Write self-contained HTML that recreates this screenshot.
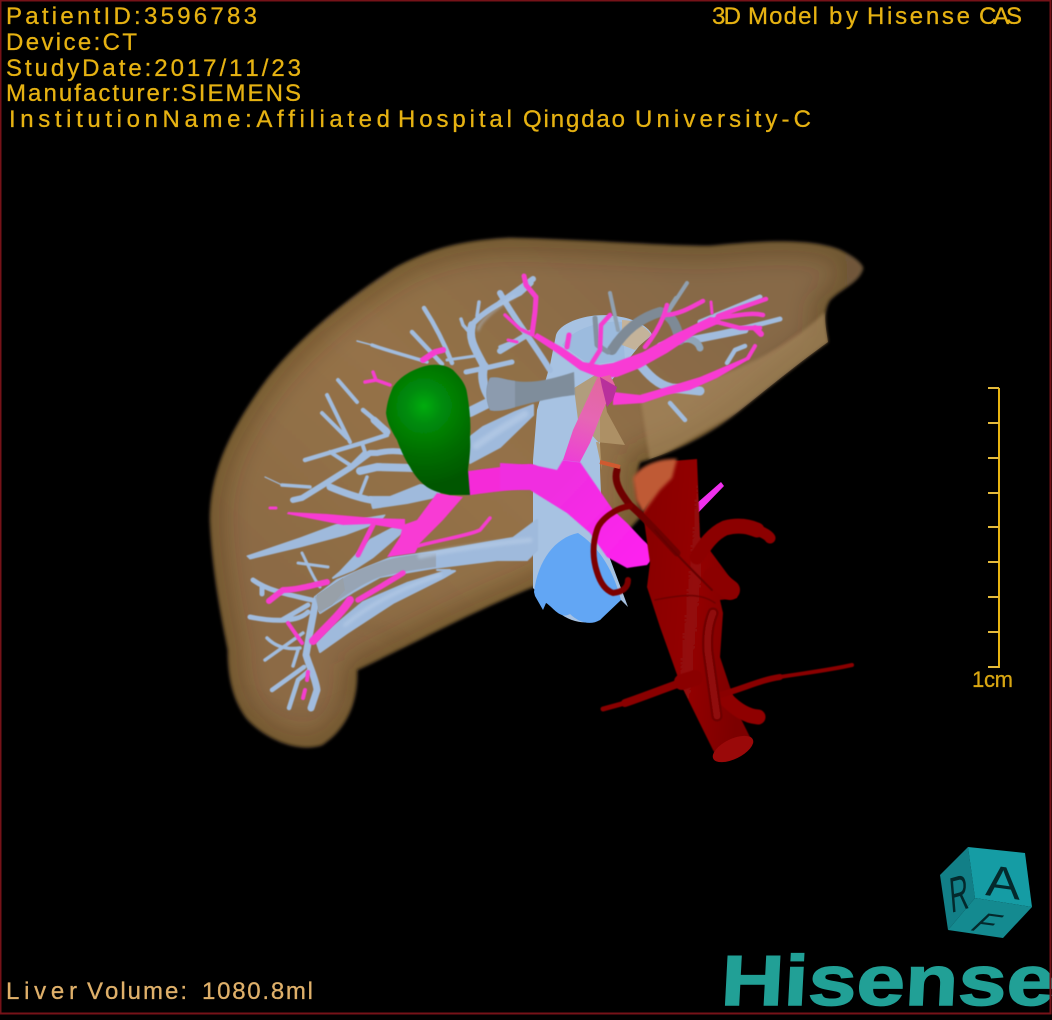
<!DOCTYPE html>
<html><head><meta charset="utf-8"><style>
html,body{margin:0;padding:0;background:#000;width:1052px;height:1020px;overflow:hidden}
svg{display:block}
text{font-family:"Liberation Sans",sans-serif;font-kerning:none}
.t{font-size:24px;fill:#e6b212;stroke:#e6b212;stroke-width:.3}
.v path{fill:none;stroke-linecap:round;stroke-linejoin:round}
</style></head><body>
<svg width="1052" height="1020" viewBox="0 0 1052 1020" xmlns="http://www.w3.org/2000/svg">
<defs>
<path id="lp" d="M863 268C860 282 842 288 830 300C822 312 826 328 828 342C800 362 768 388 738 412C705 438 668 454 640 462C634 478 636 500 641 516L630 528L604 540C580 556 556 575 533 587C475 610 410 645 357 670C358 700 348 728 322 745C300 752 270 742 248 720C232 700 228 675 228 650C222 620 212 570 210 520C210 470 232 430 258 392C290 345 345 300 395 268C435 246 470 240 510 238C590 240 660 246 710 246C760 241 810 238 840 250C852 256 861 262 863 268Z"/>
<linearGradient id="lv" gradientUnits="userSpaceOnUse" x1="300" y1="600" x2="640" y2="240"><stop offset="0" stop-color="#8c6b44"/><stop offset="0.45" stop-color="#957248"/><stop offset="1" stop-color="#876946"/></linearGradient>
<radialGradient id="gr" gradientUnits="userSpaceOnUse" cx="424" cy="406" r="80"><stop offset="0" stop-color="#02ac0a"/><stop offset="0.22" stop-color="#018c08"/><stop offset="0.6" stop-color="#006e04"/><stop offset="1" stop-color="#045604"/></radialGradient>
<linearGradient id="ao" x1="0" y1="0" x2="1" y2="0.25"><stop offset="0" stop-color="#870505"/><stop offset="0.55" stop-color="#940707"/><stop offset="1" stop-color="#7c0404"/></linearGradient>
<linearGradient id="mg" gradientUnits="userSpaceOnUse" x1="560" y1="480" x2="650" y2="565"><stop offset="0" stop-color="#f02fe0"/><stop offset="1" stop-color="#ff20f0"/></linearGradient>
<linearGradient id="up" gradientUnits="userSpaceOnUse" x1="600" y1="380" x2="570" y2="465"><stop offset="0" stop-color="#e2689e"/><stop offset="0.45" stop-color="#e666b4"/><stop offset="1" stop-color="#ee3cd8"/></linearGradient>
<filter id="b2" x="-5%" y="-5%" width="110%" height="110%"><feGaussianBlur stdDeviation="1.5"/></filter>
<filter id="b6" x="-10%" y="-10%" width="120%" height="120%"><feGaussianBlur stdDeviation="14"/></filter>
<filter id="b4" x="-20%" y="-20%" width="140%" height="140%"><feGaussianBlur stdDeviation="4"/></filter>
<filter id="s" x="-5%" y="-5%" width="110%" height="110%"><feGaussianBlur stdDeviation="0.5"/></filter>
<clipPath id="lc"><use href="#lp"/></clipPath>
</defs>
<rect width="1052" height="1020" fill="#000"/>

<!-- liver -->
<use href="#lp" fill="url(#lv)" filter="url(#b2)"/>
<g clip-path="url(#lc)">
<use href="#lp" fill="none" stroke="#3c2c18" stroke-opacity=".6" stroke-width="16" filter="url(#b6)"/>
<path d="M640 395C700 388 775 360 825 312L830 345L738 412L650 462Z" fill="#a98a5e" opacity=".6" filter="url(#b2)"/>
<path d="M240 690C265 720 315 722 350 700" fill="none" stroke="#7c6040" stroke-width="10" opacity=".3" filter="url(#b4)"/>
<path d="M410 660C405 640 395 630 352 625" fill="none" stroke="#7a5c38" stroke-width="5" opacity=".3" filter="url(#b4)"/>
</g>

<!-- IVC -->
<path d="M556 335C560 322 590 312 615 316C635 318 650 328 652 335L640 345L600 395L600 470L603 540L628 607L619 598L600 620C585 625 570 622 558 612L548 604L533 588L533 460L537 410L550 365Z" fill="#a7c2e2"/>
<path d="M562 345C575 325 610 320 622 322L625 360L590 365Z" fill="#9cbbde"/>
<path d="M622 320C635 320 648 328 651 335L635 350L622 345Z" fill="#c4b39a"/>
<path d="M534 592C538 560 555 538 578 533C596 545 612 565 621 600L600 620C590 626 578 622 570 614C560 620 552 606 546 603L543 610L535 596Z" fill="#62a6f4"/>
<!-- tan overlay -->
<path d="M574 388L600 372L607 412L625 445L596 442L602 470L600 444L578 420Z" fill="#b3976b" opacity=".85"/>

<!-- veins -->
<g fill="#9fbadc" stroke="#9fbadc" stroke-width="2" stroke-linejoin="round" filter="url(#s)">
<path d="M533 405L515 412L483 427L470 437L470 463L500 447L533 415Z"/>
<path d="M537 520L513 538L433 552L390 558L337 580L315 597L320 613L353 592L380 577L433 568L497 560L527 560L537 550Z"/>
<path d="M437 570L450 570L407 583L363 602L333 627L317 643L320 652L347 633L393 603L443 578L455 571Z"/>
<path d="M333 578L340 572L370 540L393 528L407 528L373 557L353 570Z"/>
<path d="M385 515L343 522L300 538L247 556L250 559L300 547L345 535L380 522Z" stroke-width="1"/>
<path d="M437 486L420 485L390 497L370 497L373 508L407 503L440 496Z"/>
</g>
<g class="v" stroke="#a1bcde" filter="url(#s)">
<path d="M490 398C483 388 481 375 484 366" stroke-width="9"/>
<path d="M484 366C476 350 468 340 472 325" stroke-width="8"/>
<path d="M472 325C482 312 505 300 520 293L531 283" stroke-width="5.5"/>
<path d="M470 333L463 325L461 319M500 347L525 337M477 316L479 302" stroke-width="3.5"/>
<path d="M452 363C445 345 435 325 424 308M442 364L412 332" stroke-width="4.5"/>
<path d="M427 362C405 355 385 350 372 345" stroke-width="3.5"/>
<path d="M372 345L357 341" stroke-width="1.5"/>
<path d="M447 360L475 356" stroke-width="3"/>
<path d="M466 372L490 367L512 362" stroke-width="5"/>
<path d="M470 412L490 402" stroke-width="10"/>
<path d="M405 452C390 450 382 452 377 453L370 453C360 460 354 465 350 468L323 485L302 498L293 500" stroke-width="6"/>
<path d="M413 468L377 467L360 471" stroke-width="8"/>
<path d="M367 477L360 495M310 487L282 485" stroke-width="3.5"/>
<path d="M282 485L265 477" stroke-width="1.2"/>
<path d="M363 410L387 430L387 435L362 443L305 460" stroke-width="4.5"/>
<path d="M374 420L387 432" stroke-width="7"/>
<path d="M362 443L365 452L350 467M330 452L350 465M350 442L327 395M347 438L322 413M338 380L357 402" stroke-width="4"/>
<path d="M370 500C355 497 342 492 330 487" stroke-width="7"/>
<path d="M316 600L310 632L306 655C310 668 316 680 317 690L311 708" stroke-width="7"/>
<path d="M310 670L298 680L289 708" stroke-width="4.5"/>
<path d="M312 600C295 596 270 592 253 580M262 586L262 594" stroke-width="5"/>
<path d="M308 612C298 622 275 622 250 617M308 605L282 620" stroke-width="5"/>
<path d="M303 633L265 660M300 648C285 650 275 646 267 638M298 650L293 666" stroke-width="3.5"/>
<path d="M304 667L272 690" stroke-width="4.5"/>
<path d="M302 553C308 565 313 578 320 587M298 563L328 567" stroke-width="3"/>
<path d="M500 351L530 333M500 303L533 279M500 293C515 320 535 345 550 370" stroke-width="6"/>
<path d="M638 362C648 375 658 385 672 388L700 391" stroke-width="9"/>
<path d="M670 403L685 420M727 363L735 350L745 346" stroke-width="4.5"/>
<path d="M660 345C690 338 720 335 780 319M700 322L760 297" stroke-width="5"/>
<path d="M695 340L745 330" stroke-width="7"/>
</g>
<!-- gray sections -->
<path d="M574 372C555 378 535 384 515 381C505 380 497 376 490 378C485 388 486 400 490 410C500 413 520 405 540 401C553 398 565 396 575 395Z" fill="#7f8d9b" filter="url(#s)"/>
<path d="M515 381C505 380 497 376 490 378C485 388 486 400 490 410C497 412 506 410 515 407Z" fill="#8c9bae" filter="url(#s)"/>
<g class="v" stroke="#7f8e9c" filter="url(#s)">
<path d="M612 350C625 330 640 318 660 312C672 315 676 325 680 340" stroke-width="10" stroke="#7e8a96"/>
<path d="M618 330L610 293M668 312L687 283M665 315L676 298" stroke-width="4" stroke="#90a0b0"/>
<path d="M595 318L597 345L608 352" stroke-width="5" stroke="#83929f"/>
<path d="M680 338C692 338 698 342 700 348" stroke-width="7" stroke="#90a5b8"/>
</g>
<path d="M436 553C415 554 395 557 380 562C360 568 340 578 315 597L320 613C335 603 360 584 380 577C400 572 420 569 436 567Z" fill="#97a4b4" filter="url(#s)"/>
<path d="M343 578L317 595L318 612L332 605L345 590Z" fill="#98a0a8"/>
<!-- highlight on main veins -->
<g class="v" stroke="#b5cbe6" filter="url(#b2)" opacity=".7">
<path d="M525 414C505 426 490 436 476 446" stroke-width="7"/>
<path d="M530 540C490 544 450 550 420 556" stroke-width="5"/>
<path d="M440 575C410 585 375 600 345 625" stroke-width="4"/>
<path d="M478 330C480 320 500 305 515 296" stroke-width="2"/>
</g>

<!-- portal -->
<g fill="#f83ad4" filter="url(#s)">
<path d="M613 363L643 352L673 335L710 317L720 318L720 323L697 333L667 353L640 368L617 377L600 378L580 370L557 353L533 337L537 333L563 348L583 362L600 365Z"/>
<path d="M613 392L640 395L667 387L700 377L733 363L747 357L748 360L717 378L690 390L667 395L643 403L613 405Z"/>
<path d="M437 493L463 497L443 520L420 543L415 553L387 557L400 537L403 525L417 520Z"/>
<path d="M405 519L373 518L327 514L288 512L287 514L343 525L370 524L405 530Z"/>
</g>
<g class="v" stroke="#f53ccf" filter="url(#s)">
<path d="M717 318C735 316 750 312 763 315M718 316L740 308L766 299M717 322L740 328L760 328" stroke-width="4.5"/>
<path d="M755 328L761 334" stroke-width="6"/>
<path d="M748 358L755 346" stroke-width="4"/>
<path d="M645 347C655 335 660 325 664 315C680 315 695 305 703 301M664 315L667 305" stroke-width="4.5"/>
<path d="M712 313L711 302" stroke-width="3"/>
<path d="M533 335L520 329L505 315" stroke-width="3.5"/>
<path d="M532 334L535 312L536 297L526 285L524 276" stroke-width="5"/>
<path d="M590 366L600 350L601 325L610 315" stroke-width="4.5"/>
<path d="M567 347L569 335" stroke-width="5"/>
<path d="M517 342L508 340" stroke-width="3"/>
<path d="M423 360L435 352L443 350" stroke-width="6"/>
<path d="M390 385L376 380L373 372M376 380L365 382" stroke-width="3.5"/>
<path d="M276 508L270 508" stroke-width="3"/>
<path d="M418 546C440 540 470 535 480 530L490 518" stroke-width="3.5"/>
<path d="M373 525L358 555" stroke-width="5"/>
<path d="M327 582C310 586 295 590 283 590L269 601" stroke-width="6"/>
<path d="M350 600C340 615 325 628 313 641" stroke-width="8"/>
<path d="M358 600C375 590 392 580 403 573" stroke-width="5.5"/>
<path d="M288 623L302 643" stroke-width="4"/>
<path d="M308 672L307 680M305 690L303 698" stroke-width="4"/>
<path d="M470 483C490 480 510 478 530 476" stroke-width="24" stroke="#f52cd8"/>
</g>
<path d="M597 378L573 430L563 460L580 462L590 443L603 410L615 385L610 375Z" fill="url(#up)"/>
<path d="M600 377L617 387L613 400L607 407L602 387Z" fill="#b8309c"/>
<path d="M500 463L533 465L557 470L563 460L580 462L613 510L627 523L643 540L657 553L647 565L627 568L607 557L590 533L567 513L530 490L500 490Z" fill="url(#mg)" filter="url(#s)"/>
<path d="M721 482L724 486L696 515L677 546L656 556L654 553L670 541L688 511Z" fill="#f030ee"/>

<!-- artery -->
<path d="M672 461L697 459L699 510L700 537L737 587L737 598L720 600L723 613L720 657L740 717L753 743L720 760L713 750L680 683L660 627L647 587L650 563L643 513Z" fill="url(#ao)" filter="url(#s)"/>
<path d="M633 478C640 465 660 458 677 459L672 478L660 490L643 513L636 500Z" fill="#bf5a36" filter="url(#b2)"/>
<ellipse cx="733" cy="749" rx="22" ry="10" transform="rotate(-26 733 749)" fill="#9a0909"/>
<g class="v" filter="url(#s)">
<path d="M697 557C705 545 712 534 725 528C740 524 750 527 757 530" stroke="#8c0505" stroke-width="15"/>
<path d="M757 530C764 533 768 535 770 538" stroke="#8c0505" stroke-width="11"/>
<path d="M713 577L730 590" stroke="#8c0505" stroke-width="20"/>
<path d="M727 700C735 708 745 716 758 717" stroke="#8f0505" stroke-width="15"/>
<path d="M720 695C745 688 760 680 780 677" stroke="#8a0505" stroke-width="6"/>
<path d="M780 677C805 673 830 670 852 665" stroke="#8a0505" stroke-width="4"/>
<path d="M680 683C655 692 640 698 625 703" stroke="#8a0505" stroke-width="8"/>
<path d="M625 703L603 709" stroke="#8a0505" stroke-width="5"/>
<path d="M682 682L695 678" stroke="#8a0505" stroke-width="16"/>
<path d="M713 613C708 625 707 640 708 652L717 716" stroke="#6c0000" stroke-width="11"/>
<path d="M713 613C708 625 707 640 708 652L717 716" stroke="#900707" stroke-width="7"/>
<path d="M617 470C614 480 618 490 630 505C645 518 660 535 677 553" stroke="#6e0000" stroke-width="7"/>
<path d="M630 506C615 508 600 520 597 530C592 545 593 560 597 572C600 582 605 590 613 593C622 592 628 588 628 580" stroke="#7c0505" stroke-width="6"/>
<path d="M655 530C670 548 690 568 712 590" stroke="#660000" stroke-width="2"/>
<path d="M655 600C680 595 700 592 715 603" stroke="#6e0000" stroke-width="1.5"/>
</g>
<path d="M600 462L620 467" stroke="#cf5a30" stroke-width="4"/>

<!-- gallbladder -->
<path d="M430 365C440 364 448 366 453 370C461 378 466 385 467 393C470 410 471 425 470 437C471 450 469 460 468 470L470 495L450 495C440 493 433 491 427 487C420 482 414 475 410 467C404 458 400 448 397 440C391 430 387 422 386 413C387 402 390 394 393 387C398 380 403 376 410 372C416 369 423 366 430 365Z" fill="url(#gr)" filter="url(#s)"/>

<!-- scale -->
<g stroke="#e8b410" fill="none">
<path d="M999 388V668" stroke-width="2"/>
<path d="M988 388H999M988 423H999M988 458H999M988 493H999M988 527H999M988 562H999M988 597H999M988 632H999M988 667H999" stroke-width="2" stroke="#e4ba3c"/>
</g>
<text class="t" x="972" y="687" textLength="41" style="font-size:22px;fill:#d8a612;stroke:#d8a612">1cm</text>

<!-- text -->
<text class="t" x="6" y="24" textLength="251">PatientID:3596783</text>
<text class="t" x="6" y="50" textLength="131">Device:CT</text>
<text class="t" x="6" y="76" textLength="295">StudyDate:2017/11/23</text>
<text class="t" x="6" y="101" textLength="295">Manufacturer:SIEMENS</text>
<text class="t" x="9" y="127" textLength="381">InstitutionName:Affiliated</text>
<text class="t" x="398" y="127" textLength="114">Hospital</text>
<text class="t" x="523" y="127" textLength="102">Qingdao</text>
<text class="t" x="635" y="127" textLength="176">University-C</text>
<text class="t" x="712" y="24" textLength="29">3D</text>
<text class="t" x="748" y="24" textLength="70">Model</text>
<text class="t" x="829" y="24" textLength="29">by</text>
<text class="t" x="867" y="24" textLength="103">Hisense</text>
<text class="t" x="979" y="24" textLength="43">CAS</text>
<text class="t" x="6" y="999" textLength="71" style="fill:#dfb06a;stroke:#dfb06a">Liver</text>
<text class="t" x="87" y="999" textLength="100" style="fill:#dfb06a;stroke:#dfb06a">Volume:</text>
<text class="t" x="202" y="999" textLength="111" style="fill:#dfb06a;stroke:#dfb06a">1080.8ml</text>

<!-- cube -->
<path d="M940 875L968 847L975 898L948 930Z" fill="#127f87"/>
<path d="M968 847L1025 853L1032 907L975 898Z" fill="#159ca4"/>
<path d="M948 930L975 898L1032 907L1003 938Z" fill="#148a90"/>
<text transform="matrix(.5 -.14 .08 .95 951 913)" font-size="52" fill="#04292c">R</text>
<text transform="matrix(1 .14 -.03 .85 985 895)" font-size="52" fill="#04292c">A</text>
<text transform="matrix(.95 .13 -.76 .72 968 930)" font-size="34" fill="#04292c">F</text>

<!-- logo -->
<text transform="translate(720 1005) skewX(-3)" font-size="71" font-weight="700" textLength="334" lengthAdjust="spacingAndGlyphs" fill="#21a096" stroke="#21a096" stroke-width="1.4">Hisense</text>

<!-- border -->
<path d="M0.5 0.5H1050.5V1013.5H0.5Z" fill="none" stroke="#761218" stroke-width="2"/>
</svg>
</body></html>
